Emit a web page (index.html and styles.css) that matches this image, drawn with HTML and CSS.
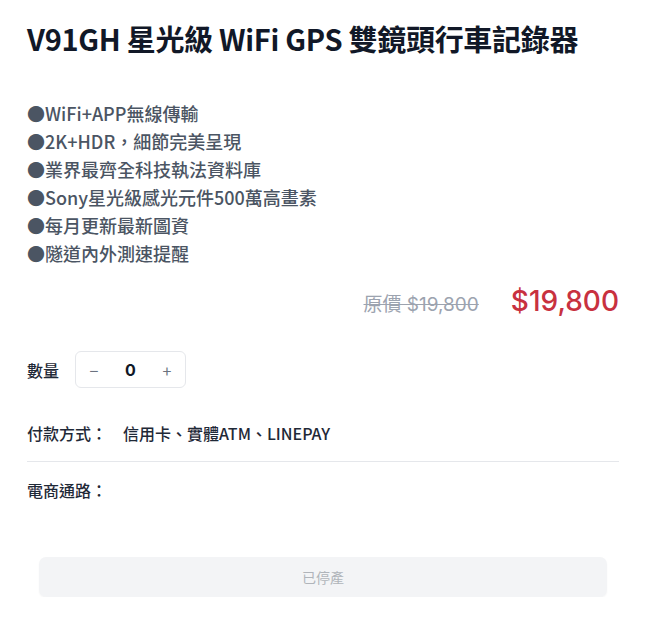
FILE: index.html
```html
<!DOCTYPE html>
<html lang="zh-Hant">
<head>
<meta charset="utf-8">
<link rel="stylesheet" href="styles.css">
</head>
<body>
<main class="product">
  <h1 class="title">V91GH 星光級 WiFi GPS 雙鏡頭行車記錄器</h1>
  <ul class="features">
    <li>●WiFi+APP無線傳輸</li>
    <li>●2K+HDR，細節完美呈現</li>
    <li>●業界最齊全科技執法資料庫</li>
    <li>●Sony星光級感光元件500萬高畫素</li>
    <li>●每月更新最新圖資</li>
    <li>●隧道內外測速提醒</li>
  </ul>
  <div class="prices">
    <span class="old-price">原價 $19,800</span>
    <span class="price">$19,800</span>
  </div>
  <div class="qty-row">
    <span class="label">數量</span>
    <div class="stepper">
      <span class="step">−</span>
      <span class="qty">0</span>
      <span class="step">+</span>
    </div>
  </div>
  <div class="pay-row">
    <span class="label">付款方式：</span>
    <span class="pay-value">信用卡、實體ATM、LINEPAY</span>
  </div>
  <div class="divider"></div>
  <div class="shop-row">
    <span class="label">電商通路：</span>
  </div>
  <div class="btn-wrap">
    <button class="btn" disabled>已停產</button>
  </div>
</main>
</body>
</html>
```
FILE: styles.css
```css
* { box-sizing: border-box; }
html, body { margin: 0; padding: 0; background: #fff; }
body {
  font-family: "Noto Sans CJK TC", "Noto Sans", sans-serif;
  color: #1f2937;
}
.product {
  width: 667px;
  padding: 18px 48px 0 27px;
  display: flex;
  flex-direction: column;
}
.title {
  margin: 0;
  font-size: 29px;
  line-height: 40px;
  font-weight: 700;
  color: #111827;
  letter-spacing: -0.3px;
}
.features {
  list-style: none;
  margin: 41px 0 0;
  padding: 0;
  font-size: 18px;
  line-height: 28px;
  color: #4b5563;
  font-weight: 500;
}
.prices {
  display: flex;
  justify-content: flex-end;
  align-items: baseline;
  gap: 32px;
  margin-top: 17px;
  height: 46px;
}
.old-price {
  font-family: "Inter", "Noto Sans CJK TC", sans-serif;
  font-size: 19px;
  color: #9ca3af;
  text-decoration: line-through;
}
.price {
  font-family: "Inter", "Noto Sans CJK TC", sans-serif;
  font-size: 28px;
  color: #c8313f;
  font-weight: 500;
}
.label {
  font-size: 16px;
  font-weight: 500;
  color: #1f2937;
}
.qty-row {
  display: flex;
  align-items: center;
  gap: 16px;
  margin-top: 21px;
}
.stepper {
  width: 111px;
  height: 37px;
  border: 1px solid #e5e7eb;
  border-radius: 6px;
  display: flex;
  align-items: center;
  justify-content: space-between;
  padding: 0 12px;
}
.step {
  font-size: 16px;
  color: #6b7280;
  width: 12px;
  text-align: center;
}
.qty {
  font-family: "Inter", sans-serif;
  font-size: 16px;
  font-weight: 700;
  color: #111827;
}
.pay-row {
  display: flex;
  align-items: center;
  margin-top: 33px;
  font-size: 16px;
}
.pay-row .label { width: 96px; }
.pay-value { font-weight: 500; color: #1f2937; }
.divider {
  height: 1px;
  background: #e5e7eb;
  margin-top: 16px;
}
.shop-row {
  margin-top: 16px;
  line-height: 24px;
}
.btn-wrap {
  padding: 55px 12px 0;
}
.btn {
  width: 100%;
  height: 40px;
  border: none;
  border-radius: 7px;
  background: #f3f4f6;
  color: #b0b4ba;
  font-family: "Noto Sans CJK TC", sans-serif;
  font-size: 14px;
  box-shadow: 0 1px 2px rgba(0,0,0,0.04);
}
```
